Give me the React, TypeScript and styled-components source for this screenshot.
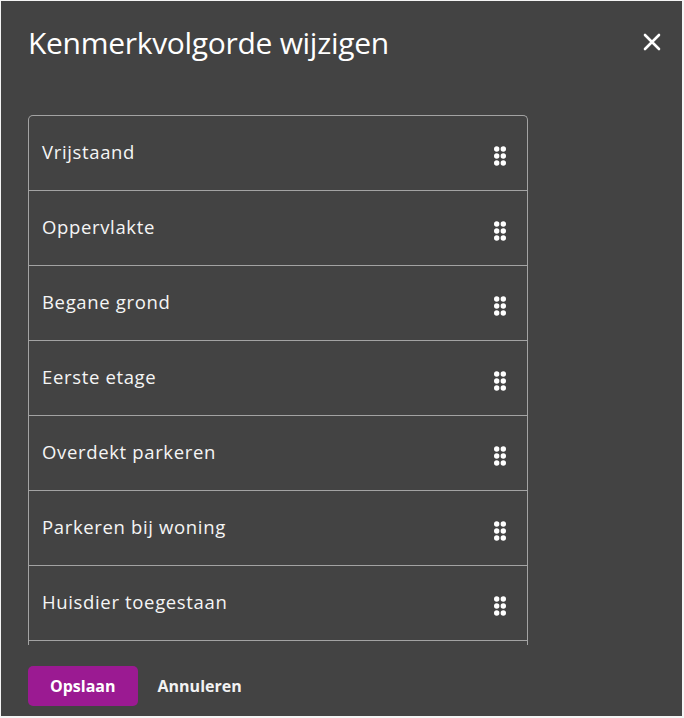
import styled, { createGlobalStyle } from 'styled-components';

const GlobalStyle = createGlobalStyle`
  html, body {
    margin: 0;
    padding: 0;
    background: #f4f4f4;
  }
  body {
    font-family: "Open Sans", "Noto Sans", sans-serif;
  }
`;

const Dialog = styled.div`
  box-sizing: border-box;
  width: 681px;
  height: 715px;
  margin: 1px 2px 2px 1px;
  background: #434343;
  color: #ffffff;
  display: flex;
  flex-direction: column;
  padding: 0 0 0 27px;
`;

const Header = styled.div`
  display: flex;
  align-items: center;
  justify-content: space-between;
  height: 82px;
  padding-right: 19px;
`;

const Title = styled.h2`
  margin: 0;
  font-size: 30px;
  font-weight: 400;
  letter-spacing: -0.3px;
`;

const CloseButton = styled.button`
  background: none;
  border: 0;
  padding: 0;
  width: 22px;
  height: 22px;
  display: flex;
  align-items: center;
  justify-content: center;
  cursor: pointer;
`;

const ListScroll = styled.div`
  margin-top: 32px;
  width: 500px;
  height: 530px;
  overflow: hidden;
  box-sizing: border-box;
  border: 1px solid #a3a3a3;
  border-bottom: 0;
  border-radius: 5px 5px 0 0;
`;

const Row = styled.div`
  box-sizing: border-box;
  height: 75px;
  display: flex;
  align-items: center;
  justify-content: space-between;
  padding: 0 21px 3px 13px;
  border-bottom: 1px solid #a3a3a3;
  font-size: 18.5px;
  letter-spacing: 0.65px;
  color: #f5f5f5;
`;

const Handle = styled.svg`
  display: block;
  margin-top: 8px;
`;

const Footer = styled.div`
  display: flex;
  align-items: center;
  gap: 20px;
  margin-top: 21px;
`;

const PrimaryButton = styled.button`
  height: 40px;
  padding: 0 22px;
  border: 0;
  border-radius: 5px;
  background: #9b1a92;
  color: #ffffff;
  font-family: "Open Sans", "Noto Sans", sans-serif;
  font-size: 16px;
  font-weight: 700;
  line-height: 22px;
  cursor: pointer;
`;

const TextButton = styled.button`
  height: 40px;
  padding: 0;
  border: 0;
  background: none;
  color: #f2f2f2;
  font-family: "Open Sans", "Noto Sans", sans-serif;
  font-size: 16px;
  font-weight: 700;
  line-height: 22px;
  cursor: pointer;
`;

function DragHandle() {
  const dots = [0, 1, 2].flatMap((r) => [0, 1].map((c) => ({ r, c })));
  return (
    <Handle width='12' height='20' viewBox='0 0 12 20'>
      {dots.map(({ r, c }) => (
        <circle key={`${r}-${c}`} cx={2.7 + c * 6.6} cy={3 + r * 7} r='2.7' fill='#ffffff' />
      ))}
    </Handle>
  );
}

const items = [
  'Vrijstaand',
  'Oppervlakte',
  'Begane grond',
  'Eerste etage',
  'Overdekt parkeren',
  'Parkeren bij woning',
  'Huisdier toegestaan',
  'Tuin',
];

export default function App() {
  return (
    <>
      <GlobalStyle />
      <Dialog>
        <Header>
          <Title>Kenmerkvolgorde wijzigen</Title>
          <CloseButton aria-label='Sluiten'>
            <svg width='18' height='18' viewBox='0 0 18 18'>
              <path d='M2 2 L16 16 M16 2 L2 16' stroke='#ffffff' strokeWidth='2.6' strokeLinecap='round' />
            </svg>
          </CloseButton>
        </Header>
        <ListScroll>
          {items.map((item) => (
            <Row key={item}>
              <span>{item}</span>
              <DragHandle />
            </Row>
          ))}
        </ListScroll>
        <Footer>
          <PrimaryButton>Opslaan</PrimaryButton>
          <TextButton>Annuleren</TextButton>
        </Footer>
      </Dialog>
    </>
  );
}
